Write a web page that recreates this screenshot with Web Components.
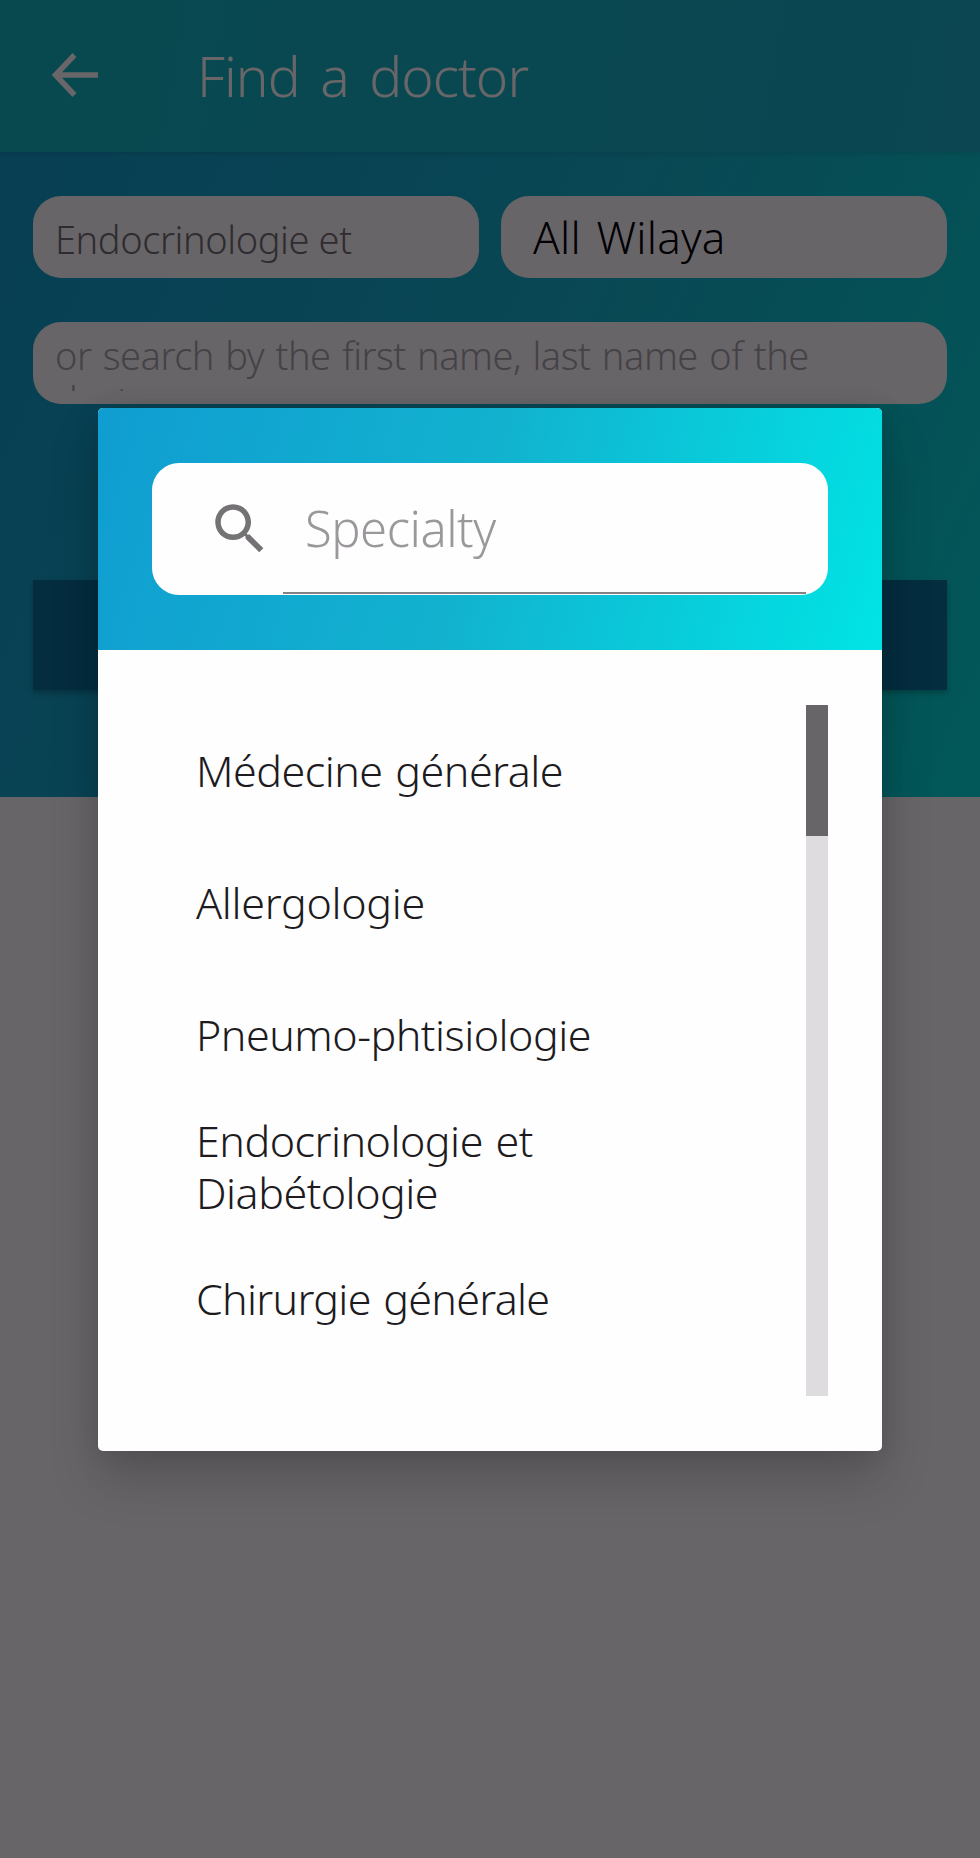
<!DOCTYPE html>
<html lang="en">
<head>
<meta charset="utf-8">
<title>Find a doctor</title>
<style>
	body {
		margin: 0;
		background: #fffdff;
		font-family: "Noto Sans", "Open Sans", sans-serif;
		font-weight: 270;
	}
</style>
</head>
<body>
<doctor-app>
	<app-bar>Find a doctor</app-bar>
	<search-panel>
		<pill-field slot="row" class="specialty">Endocrinologie et</pill-field>
		<pill-field slot="row" class="wilaya">All Wilaya</pill-field>
		<pill-field slot="wide" class="name">or search by the first name, last name of the doctor</pill-field>
	</search-panel>
	<picker-dialog slot="dialog">
		<search-box slot="search">Specialty</search-box>
		<picker-item>Médecine générale</picker-item>
		<picker-item style="letter-spacing: -0.3px">Allergologie</picker-item>
		<picker-item>Pneumo-phtisiologie</picker-item>
		<picker-item>Endocrinologie et Diabétologie</picker-item>
		<picker-item style="letter-spacing: -0.7px">Chirurgie générale</picker-item>
	</picker-dialog>
</doctor-app>

<script>
function define(name, html) {
	const template = document.createElement("template");
	template.innerHTML = html;
	customElements.define(name, class extends HTMLElement {
		constructor() {
			super();
			this.attachShadow({ mode: "open" });
			this.shadowRoot.appendChild(template.content.cloneNode(true));
		}
	});
}

//Screen with the scrim and the dialog on top
define("doctor-app", `
<style>
	:host {
		display: block;
		position: relative;
		width: 980px;
		height: 1858px;
		overflow: hidden;
	}
	.scrim {
		position: absolute;
		inset: 0;
		z-index: 2;
		display: flex;
		align-items: center;
		justify-content: center;
		background: rgba(3, 0, 3, 0.6);
	}
</style>
<slot></slot>
<div class="scrim"><slot name="dialog"></slot></div>
`);

//Top bar
define("app-bar", `
<style>
	:host {
		display: flex;
		align-items: center;
		box-sizing: border-box;
		height: 152px;
		padding: 0 0 0 49px;
		gap: 94px;
		background: linear-gradient(100deg, #10b7c2, #14b1c6 70%, #17aec9);
		color: #fff;
		font-size: 55px;
		letter-spacing: -0.9px;
		word-spacing: 7px;
		position: relative;
		z-index: 1;
		box-shadow: 0 1px 6px rgba(0, 0, 0, 0.15);
	}
	svg { width: 54px; height: 54px; flex: none; }
	span { line-height: 74px; margin-top: -1px; }
</style>
<svg viewBox="0 0 54 54" fill="none" stroke="#fff" stroke-width="5.5">
	<path d="M49 26H10M25.500 6L6.500 26L25.500 46"/>
</svg>
<span><slot></slot></span>
`);

//Gradient area with the three fields and the button
define("search-panel", `
<style>
	:host {
		display: flex;
		flex-direction: column;
		box-sizing: border-box;
		height: 645px;
		padding: 44px 33px 0;
		background: linear-gradient(114deg, #109dcb, #12b2cd 50%, #00dcd8 100%);
	}
	.row { display: grid; grid-template-columns: 1fr 1fr; gap: 22px; margin-bottom: 44px; }
	.button {
		height: 110px;
		margin-top: 176px;
		background: #06709a;
		box-shadow: 0 3px 6px rgba(0, 0, 0, 0.25);
	}
</style>
<div class="row"><slot name="row"></slot></div>
<slot name="wide"></slot>
<div class="button"></div>
`);

define("pill-field", `
<style>
	:host {
		display: block;
		box-sizing: border-box;
		height: 82px;
		border-radius: 28px;
		background: #fffdff;
		padding: 11px 22px;
		overflow: hidden;
		font-size: 38px;
		line-height: 45px;
		letter-spacing: -0.4px;
		color: #716d74;
	}
	div { height: 58px; overflow: hidden; }
	:host(.specialty) { padding-top: 21px; }
	:host(.wilaya) {
		padding: 19px 32px;
		font-size: 44px;
		letter-spacing: 0.2px;
		word-spacing: 4px;
		color: #000;
	}
	:host(.name) {
		padding-right: 90px;
		letter-spacing: -0.5px;
		word-spacing: 2px;
		color: #a8a5aa;
	}
</style>
<div><slot></slot></div>
`);

//Dialog
define("picker-dialog", `
<style>
	:host {
		display: flex;
		flex-direction: column;
		width: 784px;
		height: 1043px;
		border-radius: 5px;
		overflow: hidden;
		background: #fffeff;
		box-shadow: 0 28px 50px rgba(0, 0, 0, 0.18), 0 0 24px rgba(0, 0, 0, 0.1);
	}
	.head {
		box-sizing: border-box;
		height: 242px;
		padding: 55px 54px;
		background: linear-gradient(107deg, #109dd1, #12b2cf 48%, #00e4e5);
	}
	.body { display: flex; padding: 55px 54px 0; height: 691px; }
	.list { flex: 1; }
	.track { width: 22px; background: #dfdcdf; }
	.thumb { height: 131px; background: #686568; }
</style>
<div class="head"><slot name="search"></slot></div>
<div class="body">
	<div class="list"><slot></slot></div>
	<div class="track"><div class="thumb"></div></div>
</div>
`);

define("search-box", `
<style>
	:host {
		display: flex;
		box-sizing: border-box;
		height: 132px;
		padding: 0 22px 0 55px;
		border-radius: 27px;
		background: #fffeff;
		color: #9b989c;
		font-size: 49px;
		letter-spacing: -0.5px;
	}
	svg { width: 66px; height: 66px; margin-top: 33px; flex: none; }
	.input {
		flex: 1;
		box-sizing: border-box;
		height: 131px;
		margin-left: 10px;
		padding-left: 22px;
		border-bottom: 2px solid #858285;
		line-height: 131px;
	}
</style>
<svg viewBox="0 0 24 24" fill="#757275">
	<path d="M15.500 14h-.79l-.28-.27C15.410 12.590 16 11.110 16 9.500 16 5.910 13.090 3 9.500 3S3 5.910 3 9.500 5.910 16 9.500 16c1.610 0 3.090-.59 4.230-1.570l.27.280v.79l5 4.990L20.490 19l-4.990-5zm-6 0C7.010 14 5 11.990 5 9.500S7.010 5 9.500 5 14 7.010 14 9.500 11.990 14 9.500 14z"/>
</svg>
<div class="input"><slot></slot></div>
`);

define("picker-item", `
<style>
	:host {
		display: flex;
		align-items: center;
		box-sizing: border-box;
		height: 132px;
		padding: 0 60px 0 44px;
		color: #1d1b1e;
		font-size: 43px;
		line-height: 52px;
		letter-spacing: -0.5px;
		word-spacing: 2px;
	}
</style>
<span><slot></slot></span>
`);
</script>
</body>
</html>
